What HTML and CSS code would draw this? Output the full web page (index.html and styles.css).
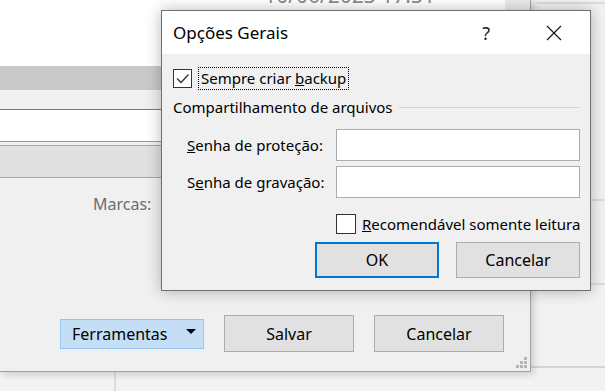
FILE: index.html
```html
<!DOCTYPE html>
<html lang="pt">
<head>
  <meta charset="UTF-8">
  <title>Opções Gerais</title>
  <link rel="stylesheet" href="styles.css">
</head>
<body>
  <div class="desktop">
    <div class="main-window">
      <div class="top-area">
        <div class="date">10/06/2023 17:31</div>
        <div class="scroll-col"></div>
      </div>
      <div class="gray-bar"></div>
      <div class="strip"></div>
      <div class="field-row"></div>
      <div class="tab-row"></div>
      <div class="form-area">
        <div class="marks-label">Marcas:</div>
        <div class="actions">
          <button class="btn tools">Ferramentas <span class="caret"></span></button>
          <button class="btn">Salvar</button>
          <button class="btn">Cancelar</button>
        </div>
        <div class="grip">
          <span></span><span></span><span></span>
          <span></span><span></span><span></span>
        </div>
      </div>
    </div>
    <div class="side">
      <div class="side-a"></div>
      <div class="side-b"></div>
      <div class="side-c"></div>
      <div class="side-d"></div>
    </div>
    <div class="bottom-strip">
      <div class="bottom-cell"></div>
    </div>
  </div>

  <div class="dialog">
    <div class="title-bar">
      <span class="title">Opções Gerais</span>
      <span class="help">?</span>
      <svg class="close" width="16" height="16" viewBox="0 0 16 16">
        <path d="M1 1 L15 15 M15 1 L1 15" stroke="#111" stroke-width="1.1" fill="none"/>
      </svg>
    </div>
    <div class="dialog-body">
      <div class="check-row">
        <span class="box">
          <svg width="17" height="17" viewBox="0 0 17 17">
            <path d="M3 8.5 L7 12.5 L14.5 4.5" stroke="#333" stroke-width="1.3" fill="none"/>
          </svg>
        </span>
        <span class="focus-label">Sempre criar <u>b</u>ackup</span>
      </div>
      <div class="group-head">
        <span>Compartilhamento de arquivos</span>
        <span class="rule"></span>
      </div>
      <div class="pw-row">
        <label><u>S</u>enha de proteção:</label>
        <span class="input"></span>
      </div>
      <div class="pw-row">
        <label>S<u>e</u>nha de gravação:</label>
        <span class="input"></span>
      </div>
      <div class="check-row readonly">
        <span class="box"></span>
        <span class="ro-label"><u>R</u>ecomendável somente leitura</span>
      </div>
      <div class="dialog-buttons">
        <button class="btn ok">OK</button>
        <button class="btn">Cancelar</button>
      </div>
    </div>
  </div>
</body>
</html>
```

FILE: styles.css
```css
body {
  margin: 0;
  width: 605px;
  height: 391px;
  overflow: hidden;
  position: relative;
  background: #f3f3f3;
  font-family: 'Noto Sans', sans-serif;
  font-size: 15px;
  color: #000;
}
.desktop {
  display: grid;
  grid-template-columns: 531px 1fr;
  grid-template-rows: 372px 1fr;
  height: 391px;
}
.main-window {
  background: #f0f0f0;
  border-right: 1px solid #a0a0a0;
  border-bottom: 1px solid #a0a0a0;
  box-shadow: 2px 2px 8px rgba(0,0,0,0.18);
  display: flex;
  flex-direction: column;
  position: relative;
  z-index: 1;
}
.top-area {
  height: 66px;
  background: #fff;
  display: flex;
  justify-content: flex-end;
  overflow: hidden;
}
.date {
  margin-top: -17px;
  margin-right: 70px;
  font-size: 21px;
  color: #8a8a8a;
  line-height: 24px;
}
.scroll-col {
  width: 25px;
  background: #ececec;
}
.gray-bar {
  height: 24px;
  background: #c9c9c9;
}
.strip {
  height: 19px;
  background: #f0f0f0;
}
.field-row {
  height: 31px;
  background: #fff;
  border-top: 1px solid #7a7a7a;
  border-bottom: 1px solid #9a9a9a;
}
.tab-row {
  margin-top: 3px;
  height: 31px;
  background: #e0e0e0;
  border-top: 1px solid #a8a8a8;
  border-bottom: 1px solid #a8a8a8;
}
.form-area {
  flex: 1;
  display: flex;
  flex-direction: column;
}
.marks-label {
  margin: 15px 0 0 93px;
  font-size: 16px;
  color: #6d6d6d;
}
.actions {
  margin-top: auto;
  margin-bottom: 19px;
  display: flex;
  align-items: center;
  padding-left: 60px;
  gap: 20px;
}
.btn {
  font-family: 'Noto Sans', sans-serif;
  font-size: 16px;
  color: #000;
  background: #e1e1e1;
  border: 1px solid #adadad;
  width: 130px;
  height: 37px;
  padding: 0;
}
.tools {
  width: 144px;
  height: 30px;
  background: #c4dff5;
  border-color: #93c6f3;
  text-align: left;
  padding-left: 11px;
  display: flex;
  align-items: center;
  justify-content: space-between;
  padding-right: 7px;
}
.caret {
  width: 0;
  height: 0;
  border-left: 5px solid transparent;
  border-right: 5px solid transparent;
  border-top: 5px solid #000;
  margin-bottom: 4px;
}
.grip {
  position: absolute;
  right: 3px;
  bottom: 3px;
  width: 11px;
  height: 11px;
  display: grid;
  grid-template-columns: repeat(3, 3px);
  grid-template-rows: repeat(3, 3px);
  gap: 1px;
}
.grip span {
  background: #b4b4b4;
}
.grip span:nth-child(1) { grid-column: 3; grid-row: 1; }
.grip span:nth-child(2) { grid-column: 2; grid-row: 2; }
.grip span:nth-child(3) { grid-column: 3; grid-row: 2; }
.grip span:nth-child(4) { grid-column: 1; grid-row: 3; }
.grip span:nth-child(5) { grid-column: 2; grid-row: 3; }
.grip span:nth-child(6) { grid-column: 3; grid-row: 3; }
.side {
  grid-row: 1 / span 2;
  grid-column: 2;
  display: flex;
  flex-direction: column;
  background: #f2f2f2;
}
.side-a {
  height: 2px;
  border-bottom: 2px solid #dcdcdc;
  margin-left: 6px;
}
.side-b {
  height: 195px;
  border-bottom: 2px solid #dcdcdc;
}
.side-c {
  height: 82px;
  border-bottom: 2px solid #dcdcdc;
}
.side-d {
  height: 81px;
  border-bottom: 2px solid #d4d4d4;
}
.bottom-strip {
  background: #f3f3f3;
}
.bottom-cell {
  width: 114px;
  height: 100%;
  border-right: 2px solid #dcdcdc;
}

/* dialog window */
.dialog {
  position: absolute;
  left: 161px;
  top: 10px;
  width: 428px;
  height: 279px;
  border: 1px solid #707070;
  background: #f0f0f0;
  box-shadow: 0 0 14px rgba(0,0,0,0.28);
  z-index: 2;
  display: flex;
  flex-direction: column;
}
.title-bar {
  height: 43px;
  background: #fff;
  display: flex;
  align-items: center;
  padding-left: 11px;
}
.title {
  font-size: 17px;
  flex: 1;
}
.help {
  font-size: 18px;
  color: #222;
  margin-right: 56px;
}
.close {
  margin-right: 28px;
}
.dialog-body {
  padding: 13px 10px 0 11px;
}
.check-row {
  display: flex;
  align-items: center;
  height: 23px;
}
.box {
  width: 17px;
  height: 17px;
  border: 1px solid #333;
  background: #fff;
  display: inline-block;
  flex-shrink: 0;
  margin-right: 6px;
}
.box svg {
  display: block;
}
.focus-label {
  border: 1px dotted #000;
  padding: 0 2px;
  line-height: 21px;
}
.group-head {
  display: flex;
  align-items: center;
  margin-top: 6px;
  height: 22px;
}
.rule {
  flex: 1;
  height: 1px;
  background: #d6d6d6;
  margin-left: 5px;
}
.pw-row {
  display: flex;
  align-items: center;
  justify-content: space-between;
  padding-left: 14px;
  margin-top: 5px;
}
.group-head + .pw-row {
  margin-top: 11px;
}
.input {
  width: 242px;
  height: 30px;
  background: #fff;
  border: 1px solid #acacac;
}
.readonly {
  margin-top: 15px;
  margin-left: 163px;
  height: 21px;
}
.readonly .box {
  width: 18px;
  height: 18px;
}
.ro-label {
  white-space: nowrap;
}
.dialog-buttons {
  display: flex;
  justify-content: flex-end;
  gap: 17px;
  margin-top: 8px;
}
.dialog-buttons .btn {
  width: 124px;
  height: 36px;
}
.ok {
  border: 2px solid #0078d7;
}
```
